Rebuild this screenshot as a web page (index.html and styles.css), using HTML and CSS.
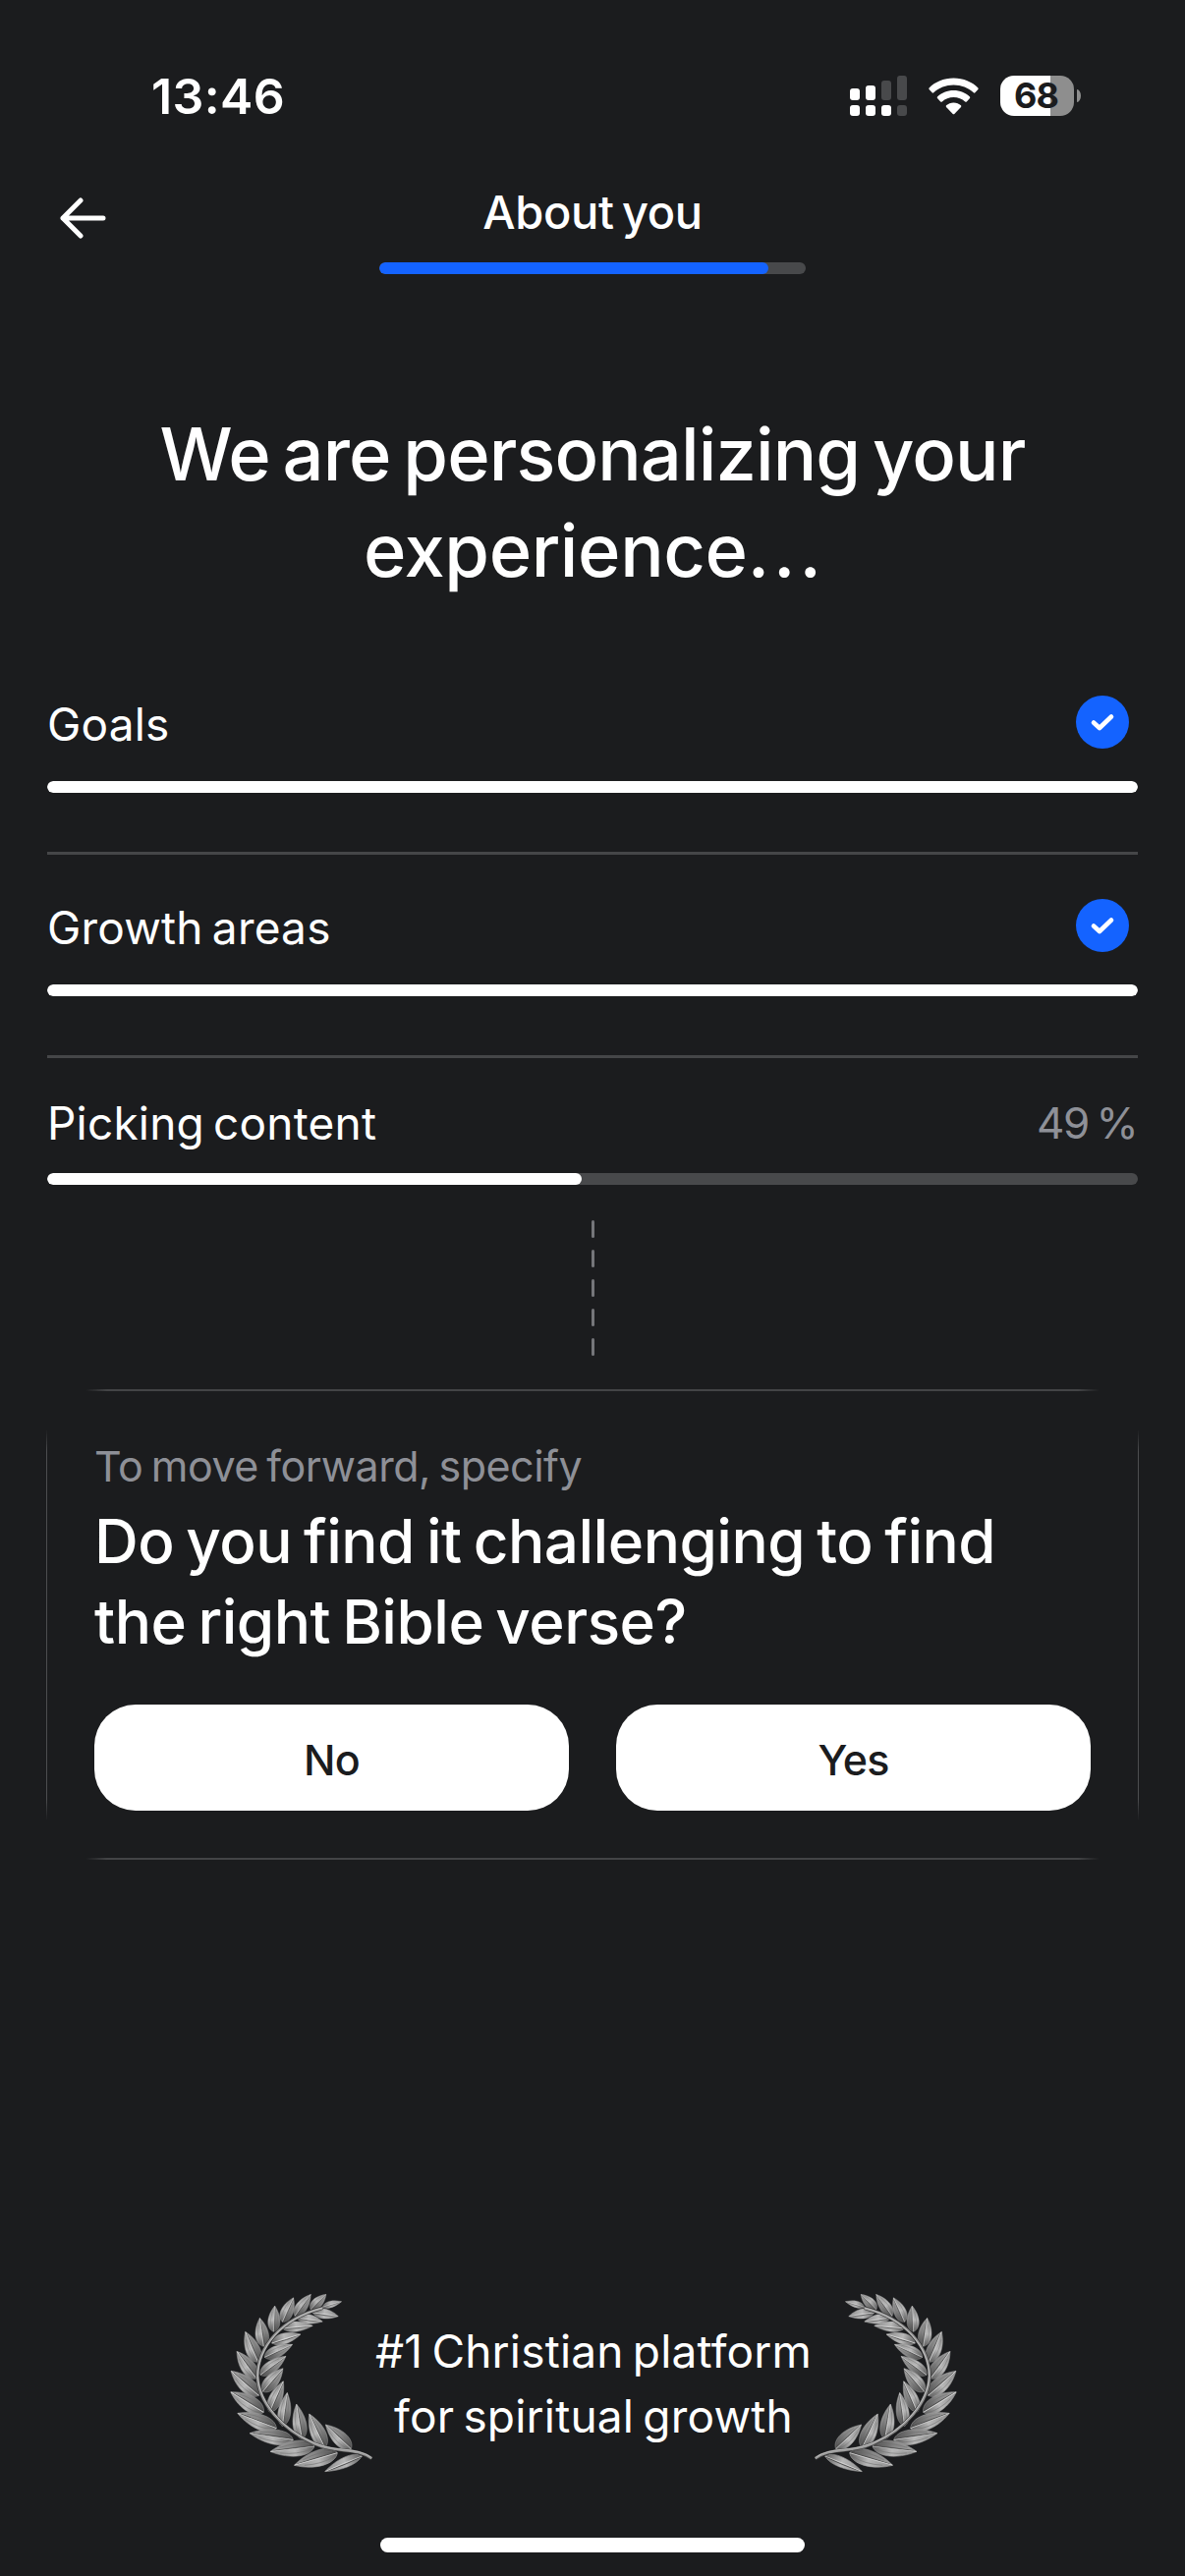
FILE: index.html
```
<!DOCTYPE html>
<html lang="en">
<head>
<meta charset="utf-8">
<title>About you</title>
<link rel="stylesheet" href="styles.css">
</head>
<body>
<svg class="defs" width="0" height="0" aria-hidden="true">
  <defs>
    <linearGradient id="leafTop" x1="0" y1="0" x2="1" y2="0">
      <stop offset="0" stop-color="#5c5c5c"/><stop offset=".45" stop-color="#b8b8b8"/><stop offset="1" stop-color="#8c8c8c"/>
    </linearGradient>
    <linearGradient id="leafBottom" x1="0" y1="0" x2="1" y2="0">
      <stop offset="0" stop-color="#484848"/><stop offset=".5" stop-color="#868686"/><stop offset="1" stop-color="#a2a2a2"/>
    </linearGradient>
    <g id="leaf">
      <path d="M0 0C10-32 56-36 100 0Z" fill="url(#leafTop)"/>
      <path d="M0 0C10 32 56 36 100 0Z" fill="url(#leafBottom)"/>
      <path d="M0 0C10-32 56-36 100 0C56 36 10 32 0 0Z" fill="none" stroke="#a0a0a0" stroke-width="1.4"/>
      <path d="M10-9Q40-21 78-9M10 9Q40 21 78 9" fill="none" stroke="#6e6e6e" stroke-width="1.4"/>
      <path d="M2 2.4Q50 4 92 1.6" fill="none" stroke="#4a4a4a" stroke-width="2.4"/>
      <path d="M0 0Q50-1 99 0" fill="none" stroke="#e2e2e2" stroke-width="2.4"/>
    </g>
    <g id="slim">
      <path d="M0 0C16-26 60-24 100 0C60 18 20 20 0 0Z" fill="url(#leafTop)" stroke="#a8a8a8" stroke-width="1.4"/>
      <path d="M2 1Q50 6 98 0" fill="none" stroke="#4a4a4a" stroke-width="2.4"/>
      <path d="M0 0Q50-2 98 0" fill="none" stroke="#e0e0e0" stroke-width="2.4"/>
    </g>
    <symbol id="laurel" viewBox="66 69 450 558">
      <use href="#slim" transform="matrix(.58 -.17 .17 .58 355 115)"/>
      <use href="#leaf" transform="matrix(.48 -.46 .42 .44 318 122)"/>
      <use href="#leaf" transform="matrix(.49 -.66 .54 .40 270 142)"/>
      <use href="#leaf" transform="matrix(.34 -.74 .66 .30 232 160)"/>
      <use href="#leaf" transform="matrix(.04 -.79 .72 .04 205 190)"/>
      <use href="#leaf" transform="matrix(-.12 -.87 .78 -.11 175 235)"/>
      <use href="#leaf" transform="matrix(-.39 -.93 .78 -.32 158 283)"/>
      <use href="#leaf" transform="matrix(-.60 -.83 .70 -.50 153 333)"/>
      <use href="#leaf" transform="matrix(-.85 -.75 .60 -.68 160 385)"/>
      <use href="#leaf" transform="matrix(-1.01 -.62 .48 -.80 175 436)"/>
      <use href="#leaf" transform="matrix(-1.19 -.46 .32 -.84 214 485)"/>
      <use href="#leaf" transform="matrix(-1.33 -.20 .13 -.88 265 520)"/>
      <use href="#leaf" transform="matrix(-1.35 .16 -.11 -.92 330 540)"/>
      <use href="#leaf" transform="matrix(-1.32 .38 -.26 -.92 400 560)"/>
      <use href="#slim" transform="matrix(-1.13 .47 .36 .87 475 570)"/>
      <use href="#slim" transform="matrix(.78 .11 -.13 .9 325 132)"/>
      <use href="#slim" transform="matrix(.80 .11 -.12 .85 275 148)"/>
      <use href="#slim" transform="matrix(.93 -.08 .08 .93 232 180)"/>
      <use href="#slim" transform="matrix(.88 -.27 .29 .95 200 225)"/>
      <use href="#leaf" transform="matrix(.85 -.39 .29 .64 178 268)"/>
      <use href="#leaf" transform="matrix(.78 -.57 .42 .58 165 322)"/>
      <use href="#leaf" transform="matrix(.62 -.71 .60 .53 172 373)"/>
      <use href="#leaf" transform="matrix(.42 -.94 .70 .32 193 435)"/>
      <use href="#leaf" transform="matrix(.15 -1.02 .74 .11 232 478)"/>
      <use href="#leaf" transform="matrix(-.17 -1.07 .80 -.12 292 518)"/>
      <use href="#leaf" transform="matrix(-.48 -1.04 .80 -.37 362 545)"/>
      <use href="#leaf" transform="matrix(-.78 -.74 .58 -.62 442 548)"/>
      <path d="M505 577C455 542 400 562 330 532C230 490 158 405 156 325C157 240 225 150 355 118" fill="none" stroke="#3c3c3c" stroke-width="11"/>
      <path d="M505 577C455 542 400 562 330 532C230 490 158 405 156 325C157 240 225 150 355 118" fill="none" stroke="#9a9a9a" stroke-width="7"/>
      <path d="M503 573C455 540 400 559 331 530C231 488 161 404 158 325C159 241 226 151 355 117" fill="none" stroke="#cfcfcf" stroke-width="2"/>
    </symbol>
  </defs>
</svg>

<div class="status">
  <span class="time">13:46</span>
  <div class="status-icons">
    <svg class="signal" width="58" height="41" viewBox="0 0 58 41">
      <g fill="#fff">
        <rect x="0" y="13" width="10" height="12" rx="3"/><rect x="16" y="10" width="10" height="15" rx="3"/>
        <rect x="0" y="30" width="10" height="11" rx="3"/><rect x="16" y="30" width="10" height="11" rx="3"/><rect x="32" y="30" width="10" height="11" rx="3"/>
      </g>
      <g fill="#48494b">
        <rect x="32" y="5" width="10" height="20" rx="3"/><rect x="48" y="0" width="10" height="25" rx="3"/><rect x="48" y="30" width="10" height="11" rx="3"/>
      </g>
    </svg>
    <svg class="wifi" width="51" height="38" viewBox="0 0 51 38" fill="#fff">
      <path d="M25.500.5C15.500.5 6.500 4.400.6 10.400Q0 11.200.6 12L3.600 15.300Q4.400 16 5.200 15.300C10.500 10.500 17.700 7.600 25.500 7.600S40.500 10.500 45.800 15.300Q46.600 16 47.400 15.300L50.400 12Q51 11.200 50.400 10.400C44.500 4.400 35.500.5 25.500.5Z"/>
      <path d="M25.500 13C19 13 13.200 15.500 9 19.500Q8.400 20.300 9 21.100L12.200 24.500Q13 25.200 13.800 24.500C16.900 21.700 21 20 25.500 20S34.100 21.700 37.200 24.500Q38 25.200 38.800 24.500L42 21.100Q42.600 20.300 42 19.500C37.800 15.500 32 13 25.500 13Z"/>
      <path d="M25.500 25.400C22.500 25.400 20 26.500 18 28.300Q17.400 29.100 18 29.900L24.700 37Q25.500 37.700 26.300 37L33 29.900Q33.600 29.100 33 28.300C31 26.500 28.500 25.400 25.500 25.400Z"/>
    </svg>
    <div class="battery"><span class="cell">68</span><span class="nub"></span></div>
  </div>
</div>

<header class="header">
  <svg class="back" width="48" height="42" viewBox="0 0 48 42" fill="none" stroke="#fff" stroke-width="5" stroke-linecap="round" stroke-linejoin="round">
    <path d="M22 3L4 21L22 39M4 21H45"/>
  </svg>
  <div class="step">
    <div class="step-title">About you</div>
    <div class="bar"><div class="fill blue" style="width:91.2%"></div></div>
  </div>
</header>

<main>
  <h1><span class="tight">We are personalizing your</span><br>experience<span class="dots">...</span></h1>

  <section class="tasks">
    <div class="task">
      <div class="task-head"><span>Goals</span>
        <svg class="check" width="54" height="54" viewBox="0 0 54 54"><circle cx="27" cy="27" r="27" fill="#1463ff"/><path d="M18 27.500L24 33L36 21.500" fill="none" stroke="#fff" stroke-width="4.600" stroke-linecap="round" stroke-linejoin="round"/></svg>
      </div>
      <div class="bar"><div class="fill" style="width:100%"></div></div>
    </div>
    <div class="task">
      <div class="task-head"><span>Growth areas</span>
        <svg class="check" width="54" height="54" viewBox="0 0 54 54"><circle cx="27" cy="27" r="27" fill="#1463ff"/><path d="M18 27.500L24 33L36 21.500" fill="none" stroke="#fff" stroke-width="4.600" stroke-linecap="round" stroke-linejoin="round"/></svg>
      </div>
      <div class="bar"><div class="fill" style="width:100%"></div></div>
    </div>
    <div class="task current">
      <div class="task-head"><span>Picking content</span><span class="percent">49 %</span></div>
      <div class="bar"><div class="fill" style="width:49%"></div></div>
    </div>
  </section>

  <div class="connector"><i></i><i></i><i></i><i></i><i></i></div>

  <section class="card">
    <p class="hint">To move forward, specify</p>
    <h2>Do you find it challenging to find<br>the right Bible verse?</h2>
    <div class="answers">
      <button type="button">No</button>
      <button type="button">Yes</button>
    </div>
  </section>
</main>

<footer class="award">
  <svg class="laurel" width="150" height="186"><use href="#laurel"/></svg>
  <p>#1 Christian platform<br>for spiritual growth</p>
  <svg class="laurel flip" width="150" height="186"><use href="#laurel"/></svg>
</footer>
<div class="home-bar"></div>
</body>
</html>
```
FILE: styles.css
```
* { box-sizing: border-box; }
body {
  margin: 0;
  width: 1206px;
  height: 2622px;
  overflow: hidden;
  background: #1b1c1e;
  color: #fff;
  font-family: Inter, "Liberation Sans", sans-serif;
}
h1, h2, p { margin: 0; font-weight: 500; }
svg { display: block; }
.defs { position: absolute; }

.status {
  height: 186px;
  padding: 10px 106px 0 154px;
  display: flex;
  align-items: center;
  justify-content: space-between;
}
.time { font-size: 50px; font-weight: 600; line-height: 60px; letter-spacing: .4px; }
.status-icons { display: flex; align-items: center; margin-top: -1px; }
.wifi { margin-left: 22px; }
.battery { display: flex; align-items: center; gap: 3px; margin-left: 22px; }
.cell {
  width: 75px;
  height: 41px;
  border-radius: 14px;
  background: linear-gradient(90deg, #fff 51px, #8e8e8e 51px);
  color: #1b1c1e;
  font-size: 36px;
  font-weight: 700;
  line-height: 41px;
  letter-spacing: -1px;
  text-align: center;
  padding-right: 2px;
}
.nub { width: 4px; height: 13px; border-radius: 0 4px 4px 0 / 0 6.5px 6.5px 0; background: #8e8e8e; }

.header { display: grid; grid-template-columns: 338px 434px 1fr; padding: 0 48px; }
.back { margin: 15px 0 0 12px; }
.step-title {
  font-size: 47px;
  font-weight: 500;
  line-height: 60px;
  letter-spacing: -.3px;
  word-spacing: -4px;
  text-align: center;
  margin-bottom: 21px;
}

.bar { height: 12px; border-radius: 6px; background: #48494b; overflow: hidden; }
.fill { height: 12px; border-radius: 6px; background: #fff; }
.blue { background: #1463ff; }

h1 {
  margin-top: 134px;
  font-size: 74px;
  line-height: 98px;
  letter-spacing: -.4px;
  text-align: center;
}
.tight { letter-spacing: -.9px; word-spacing: -6px; }
.dots { letter-spacing: 4px; margin-right: -4px; }

.tasks { margin: 99px 48px 0; }
.task { padding-bottom: 60px; margin-bottom: 45px; border-bottom: 3px solid #454648; }
.task-head {
  display: flex;
  align-items: flex-start;
  justify-content: space-between;
  height: 54px;
  margin-bottom: 33px;
  font-size: 46px;
  line-height: 58px;
  letter-spacing: .2px;
  word-spacing: -4px;
}
.check { margin-right: 9px; }
.task.current { margin: -8px 0 0; padding: 0; border: 0; }
.current .task-head { height: 58px; margin-bottom: 22px; }
.percent { font-size: 44px; letter-spacing: -1.6px; word-spacing: -3px; color: #8e9097; margin-right: 1px; }

.connector { display: flex; flex-direction: column; align-items: center; gap: 12px; margin: 36px 0 34px 1px; }
.connector i { width: 3px; height: 18px; border-radius: 1.5px; background: #75767a; }

.card {
  margin: 0 47px;
  padding: 49px 49px 50px;
  background:
    linear-gradient(90deg, transparent, #434446 22px calc(100% - 22px), transparent) 50% 0 / 1032px 2px,
    linear-gradient(90deg, transparent, #434446 22px calc(100% - 22px), transparent) 50% 100% / 1032px 2px,
    linear-gradient(transparent, #4c4d4f 22px calc(100% - 22px), transparent) 0 50% / 1px 398px,
    linear-gradient(transparent, #4c4d4f 22px calc(100% - 22px), transparent) 100% 50% / 1px 398px;
  background-repeat: no-repeat;
}
.hint { font-size: 43px; font-weight: 400; line-height: 58px; letter-spacing: -.5px; word-spacing: -3px; color: #8e9097; }
h2 { margin-top: 7px; font-size: 62px; line-height: 82px; letter-spacing: -.5px; word-spacing: -4px; }
.answers { display: flex; gap: 48px; margin-top: 43px; }
button {
  flex: 1;
  height: 108px;
  padding: 3px 0 0;
  border: 0;
  border-radius: 42px;
  background: #fff;
  color: #1b1c1e;
  font: 500 43px/58px Inter, "Liberation Sans", sans-serif;
  letter-spacing: -.8px;
}

.award { display: flex; align-items: center; justify-content: center; margin-top: 440px; padding-left: 2px; }
.award p {
  width: 444px;
  font-size: 46px;
  font-weight: 400;
  line-height: 66px;
  letter-spacing: .2px;
  word-spacing: -4px;
  text-align: center;
  white-space: nowrap;
}
.flip { transform: scaleX(-1); }
.home-bar { width: 432px; height: 15px; border-radius: 8px; background: #fff; margin: 64px auto 0; }
```
